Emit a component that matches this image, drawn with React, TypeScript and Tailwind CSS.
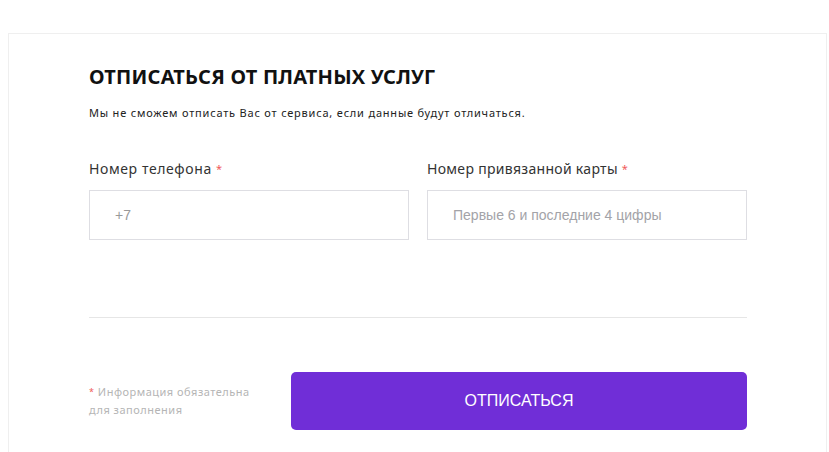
export default function App() {
  return (
    <div className="min-h-screen bg-white pt-[33px] pl-2 pr-[2px]" style={{ fontFamily: '"Noto Sans", sans-serif' }}>
      <div className="border border-[#efefef] border-b-0 h-[419px] pl-[80px] pr-[79px] pt-[31px]">
        <h1 className="text-[20px] font-bold leading-[24px] text-[#111] tracking-[0.2px]">
          ОТПИСАТЬСЯ ОТ ПЛАТНЫХ УСЛУГ
        </h1>
        <p className="mt-[17px] text-[11px] leading-[14px] text-[#222] tracking-[0.8px]">
          Мы не сможем отписать Вас от сервиса, если данные будут отличаться.
        </p>

        <div className="mt-[40px] grid grid-cols-2 gap-[18px]">
          <label className="block">
            <span className="block text-[14px] leading-[18px] text-[#333] tracking-[0.6px]">
              Номер телефона <span className="text-[11px] align-top text-[#f05a5a]">*</span>
            </span>
            <input
              className="mt-[12px] block w-full h-[50px] border border-[#dedee3] px-[25px] text-[14px] text-[#999] placeholder:text-[#999] outline-none"
              style={{ fontFamily: '"Liberation Sans", sans-serif' }}
              placeholder="+7"
            />
          </label>
          <label className="block">
            <span className="block text-[14px] leading-[18px] text-[#333] tracking-[0.3px]">
              Номер привязанной карты <span className="text-[11px] align-top text-[#f05a5a]">*</span>
            </span>
            <input
              className="mt-[12px] block w-full h-[50px] border border-[#dedee3] px-[25px] text-[14px] text-[#999] placeholder:text-[#a3a3a8] outline-none"
              style={{ fontFamily: '"Liberation Sans", sans-serif' }}
              placeholder="Первые 6 и последние 4 цифры"
            />
          </label>
        </div>

        <div className="mt-[77px] border-t border-[#e6e6e6]" />

        <div className="mt-[54px] flex items-center gap-[27px]">
          <p className="w-[175px] text-[11px] leading-[18px] text-[#b5b5b5] tracking-[0.5px]">
            <span className="text-[9px] align-top text-[#f05a5a]">*</span> Информация обязательна для заполнения
          </p>
          <button
            className="flex-1 h-[58px] rounded-[5px] bg-[#702ed7] text-white text-[16px]"
            style={{ fontFamily: '"Liberation Sans", sans-serif' }}
          >
            ОТПИСАТЬСЯ
          </button>
        </div>
      </div>
    </div>
  );
}
